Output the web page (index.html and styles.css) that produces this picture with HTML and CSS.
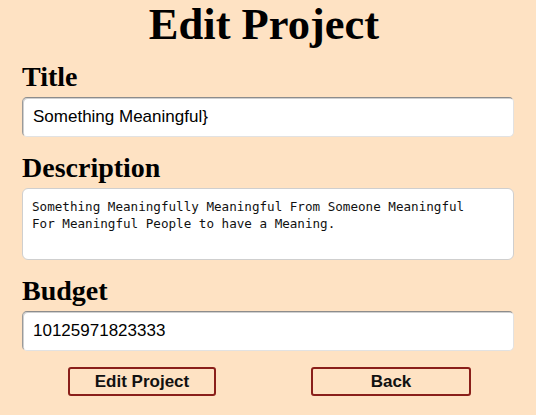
FILE: index.html
```html
<!DOCTYPE html>
<html lang="en">
<head>
<meta charset="utf-8">
<title>Edit Project</title>
<link rel="stylesheet" href="styles.css">
</head>
<body>
<main class="page">
  <h1 class="page-title">Edit Project</h1>
  <form class="form">
    <label class="field-label" for="title">Title</label>
    <input class="text-input" id="title" type="text" value="Something Meaningful}">

    <label class="field-label" for="desc">Description</label>
    <textarea class="text-area" id="desc">Something Meaningfully Meaningful From Someone Meaningful
For Meaningful People to have a Meaning.</textarea>

    <label class="field-label" for="budget">Budget</label>
    <input class="text-input" id="budget" type="text" value="10125971823333">

    <div class="actions">
      <button type="button" class="btn btn-edit">Edit Project</button>
      <button type="button" class="btn btn-back">Back</button>
    </div>
  </form>
</main>
</body>
</html>
```

FILE: styles.css
```css
html, body {
  margin: 0;
  padding: 0;
  background: #fee2c3;
}

.page {
  padding: 0 22px;
}

.page-title {
  margin: 0;
  font-family: "Liberation Serif", "Times New Roman", serif;
  font-weight: bold;
  font-size: 44.5px;
  line-height: 48px;
  text-align: center;
  color: #000;
  padding-right: 8px;
}

.form {
  display: flex;
  flex-direction: column;
  padding-top: 13px;
}

.field-label {
  font-family: "Liberation Serif", "Times New Roman", serif;
  font-weight: bold;
  font-size: 28px;
  line-height: 32px;
  color: #000;
  margin-bottom: 4px;
}

.text-input {
  box-sizing: border-box;
  height: 40px;
  margin: 0 0 15px 0;
  padding: 0 10px;
  font-family: "Liberation Sans", Arial, sans-serif;
  font-size: 17px;
  color: #000;
  background: #fff;
  border: 1px solid #e2e2e2;
  border-top-color: #8c8c8c;
  border-left-color: #9a9a9a;
  border-radius: 5px;
  box-shadow: inset 1px 1px 0 #d0d0d0;
  outline: none;
}

.text-area {
  box-sizing: border-box;
  height: 72px;
  margin: 0 0 15px 0;
  padding: 9px 9px;
  font-family: "DejaVu Sans Mono", "Liberation Mono", monospace;
  font-size: 12.6px;
  line-height: 17px;
  color: #111;
  background: #fff;
  border: 1px solid #cfcfcf;
  border-radius: 6px;
  resize: none;
  outline: none;
}

.actions {
  display: grid;
  grid-template-columns: 1fr 1fr;
  padding-top: 1px;
}

.btn {
  box-sizing: border-box;
  height: 29px;
  padding: 0;
  font-family: "Liberation Sans", Arial, sans-serif;
  font-weight: bold;
  font-size: 17px;
  color: #111;
  background: transparent;
  border: 2px solid #8a1f1a;
  border-radius: 3px;
}

.btn-edit {
  width: 148px;
  justify-self: start;
  margin-left: 46px;
}

.btn-back {
  width: 160px;
  justify-self: center;
}
```
